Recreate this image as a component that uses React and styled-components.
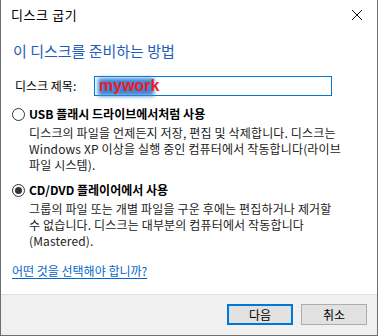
import React from "react";
import styled, { createGlobalStyle } from "styled-components";

const Global = createGlobalStyle`
  html, body { margin: 0; padding: 0; background: #ffffff; overflow: hidden; }
  * { box-sizing: border-box; }
`;

const Window = styled.div`
  width: 378px;
  height: 336px;
  background: #ffffff;
  border-left: 1px solid #6e6e6e;
  border-right: 1px solid #6e6e6e;
  border-bottom: 1px solid #6e6e6e;
  display: flex;
  flex-direction: column;
  font-family: "Noto Sans CJK KR", "Noto Sans", sans-serif;
  font-size: 12px;
  color: #000;
`;

const TitleBar = styled.div`
  height: 30px;
  display: flex;
  align-items: center;
  justify-content: space-between;
  padding: 0 10px 0 10px;
`;

const TitleText = styled.span`
  font-size: 13px;
  letter-spacing: 0.6px;
  line-height: 16px;
`;

const Close = styled.span`
  width: 12px;
  height: 12px;
  display: flex;
  margin-right: 4px;
`;

const Body = styled.div`
  flex: 1;
  padding: 0 10px 0 10px;
  display: flex;
  flex-direction: column;
`;

const Heading = styled.div`
  margin-top: 11px;
  margin-left: 2px;
  font-size: 15px;
  line-height: 20px;
  color: #1f5dba;
`;

const TitleRow = styled.div`
  margin-top: 15px;
  display: flex;
  align-items: center;
  height: 20px;
`;

const Label = styled.label`
  width: 83px;
  padding-left: 4px;
  line-height: 16px;
`;

const Input = styled.div`
  width: 238px;
  height: 20px;
  border: 1px solid #0078d7;
  padding-left: 4px;
  display: flex;
  align-items: center;
`;

const Selected = styled.span`
  position: relative;
  font-family: "Liberation Sans", Arial, sans-serif;
  font-weight: bold;
  font-size: 16px;
  color: #ee1c24;
  line-height: 18px;
  &::before {
    content: "";
    position: absolute;
    left: -1px;
    top: 1px;
    width: 56px;
    height: 18px;
    background: #3b86d4;
    filter: blur(2px);
    z-index: 0;
  }
`;

const SelText = styled.span`
  position: relative;
  z-index: 1;
`;

const Option = styled.div`
  margin-top: ${(p) => p.$top}px;
  display: flex;
  flex-direction: column;
`;

const OptionHead = styled.div`
  display: flex;
  align-items: center;
  height: 16px;
`;

const Radio = styled.span`
  width: 13px;
  height: 13px;
  border-radius: 50%;
  border: 1px solid #333;
  background: #fff;
  margin-left: 1px;
  margin-right: 4px;
  display: flex;
  align-items: center;
  justify-content: center;
  &::after {
    content: "";
    width: 7px;
    height: 7px;
    border-radius: 50%;
    background: ${(p) => (p.$checked ? "#333" : "transparent")};
  }
`;

const OptionLabel = styled.span`
  font-weight: bold;
  line-height: 16px;
`;

const Desc = styled.div`
  margin-top: 3px;
  margin-left: 18px;
  line-height: 16px;
  letter-spacing: 0.15px;
  color: #222;
  white-space: nowrap;
`;

const Link = styled.a`
  margin-top: 14px;
  margin-left: 1px;
  color: #0066cc;
  text-decoration: underline;
  text-underline-offset: 2px;
  line-height: 16px;
  align-self: flex-start;
`;

const Footer = styled.div`
  height: 41px;
  background: #f0f0f0;
  border-top: 1px solid #dfdfdf;
  display: flex;
  justify-content: flex-end;
  align-items: flex-start;
  gap: 8px;
  padding: 9px 10px 0 0;
`;

const Button = styled.button`
  width: 66px;
  height: 21px;
  background: #e1e1e1;
  border: ${(p) => (p.$default ? "2px solid #0078d7" : "1px solid #adadad")};
  font-family: "Noto Sans CJK KR", sans-serif;
  font-size: 12px;
  color: #000;
  padding: 0;
  line-height: 16px;
`;

export default function App() {
  return (
    <>
      <Global />
      <Window>
        <TitleBar>
          <TitleText>디스크 굽기</TitleText>
          <Close>
            <svg width="12" height="12" viewBox="0 0 12 12">
              <path d="M1 1 L11 11 M11 1 L1 11" stroke="#111" strokeWidth="1" />
            </svg>
          </Close>
        </TitleBar>
        <Body>
          <Heading>이 디스크를 준비하는 방법</Heading>
          <TitleRow>
            <Label>디스크 제목:</Label>
            <Input>
              <Selected>
                <SelText>mywork</SelText>
              </Selected>
            </Input>
          </TitleRow>
          <Option $top={10}>
            <OptionHead>
              <Radio />
              <OptionLabel>USB 플래시 드라이브에서처럼 사용</OptionLabel>
            </OptionHead>
            <Desc>
              디스크의 파일을 언제든지 저장, 편집 및 삭제합니다. 디스크는
              <br />
              Windows XP 이상을 실행 중인 컴퓨터에서 작동합니다(라이브
              <br />
              파일 시스템).
            </Desc>
          </Option>
          <Option $top={9}>
            <OptionHead>
              <Radio $checked />
              <OptionLabel>CD/DVD 플레이어에서 사용</OptionLabel>
            </OptionHead>
            <Desc>
              그룹의 파일 또는 개별 파일을 구운 후에는 편집하거나 제거할
              <br />
              수 없습니다. 디스크는 대부분의 컴퓨터에서 작동합니다
              <br />
              (Mastered).
            </Desc>
          </Option>
          <Link href="#">어떤 것을 선택해야 합니까?</Link>
        </Body>
        <Footer>
          <Button $default>다음</Button>
          <Button>취소</Button>
        </Footer>
      </Window>
    </>
  );
}
